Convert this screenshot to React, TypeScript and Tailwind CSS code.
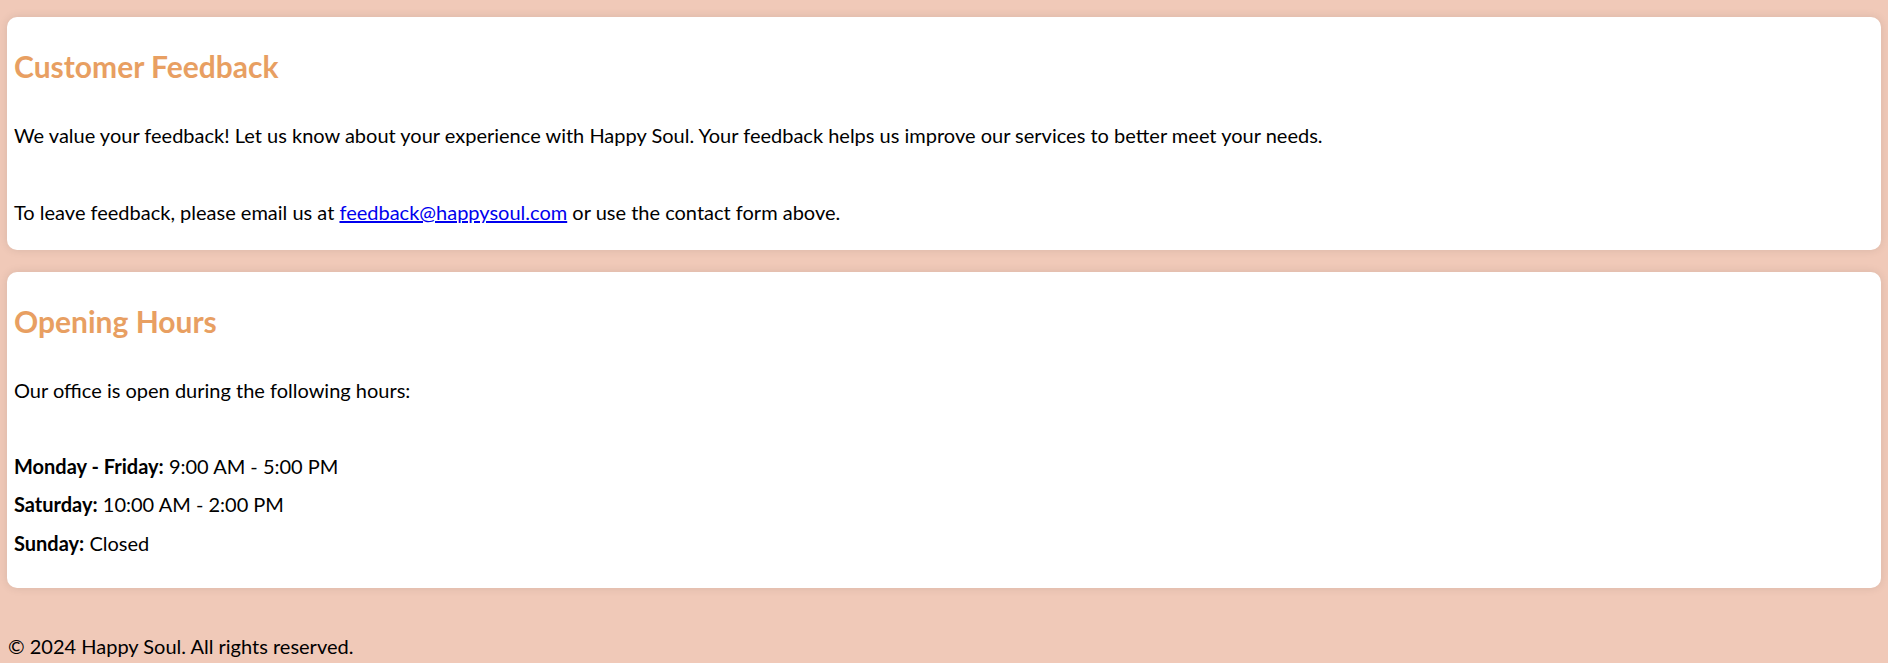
export default function App() {
  const hours = [
    { day: "Monday - Friday:", time: "9:00 AM - 5:00 PM", gap: "mt-[52px]" },
    { day: "Saturday:", time: "10:00 AM - 2:00 PM", gap: "mt-[14px]" },
    { day: "Sunday:", time: "Closed", gap: "mt-[15px]" },
  ];

  return (
    <div className="min-h-screen bg-[#f0c9b8] px-[7px] pt-[17px] font-['Lato',sans-serif] text-[20px] text-black">
      <section className="rounded-[10px] bg-white pl-[7px] pt-[31px] pb-[26px] shadow-[0_0_10px_rgba(0,0,0,0.1)]">
        <h2 className="text-[30px] font-bold leading-[36px] text-[#e89f62]">Customer Feedback</h2>
        <p className="mt-[39px] leading-[24px]">
          We value your feedback! Let us know about your experience with Happy Soul. Your feedback helps us
          improve our services to better meet your needs.
        </p>
        <p className="mt-[53px] leading-[24px]">
          To leave feedback, please email us at{" "}
          <a href="#" className="text-[#0000ee] underline">
            feedback@happysoul.com
          </a>{" "}
          or use the contact form above.
        </p>
      </section>

      <section className="mt-[22px] rounded-[10px] bg-white pl-[7px] pt-[31px] pb-[33px] shadow-[0_0_10px_rgba(0,0,0,0.1)]">
        <h2 className="text-[30px] font-bold leading-[36px] text-[#e89f62]">Opening Hours</h2>
        <p className="mt-[39px] leading-[24px]">Our office is open during the following hours:</p>
        {hours.map((h) => (
          <p key={h.day} className={`${h.gap} leading-[24px]`}>
            <strong className="font-bold">{h.day}</strong> {h.time}
          </p>
        ))}
      </section>

      <footer className="mt-[46px] pl-px leading-[24px]">© 2024 Happy Soul. All rights reserved.</footer>
    </div>
  );
}
